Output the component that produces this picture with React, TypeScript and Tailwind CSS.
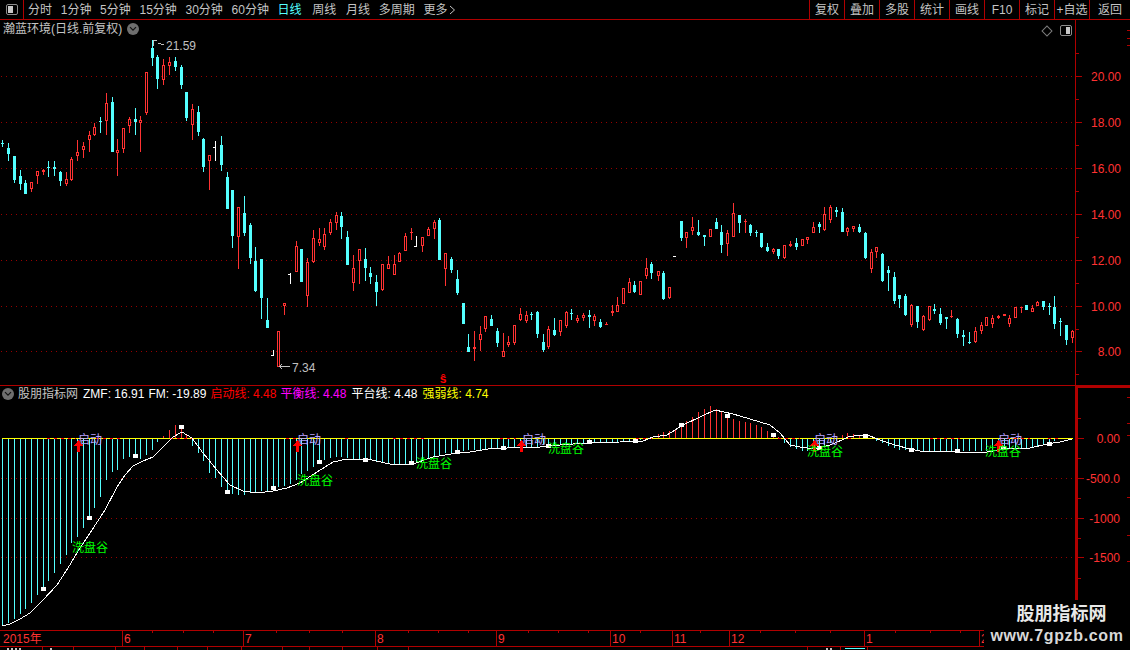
const RED = "#ff3232";
const CYAN = "#54ffff";
const FRAME = "#b00000";
const GRID = "#960000";

// x, wick top, body top, body bottom, wick bottom, kind
type Candle = [number, number, number, number, number, "c" | "r" | "w"];

const candles: Candle[] = [
  [2, 140, 143, 144, 147, "c"], [8, 143, 148, 154, 161, "c"], [14, 156, 156, 180, 183, "c"], [20, 170, 176, 184, 190, "c"],
  [25, 180, 183, 194, 194, "c"], [31, 182, 182, 189, 192, "r"], [37, 171, 171, 176, 184, "r"], [43, 169, 170, 172, 175, "r"],
  [48, 161, 167, 168, 177, "c"], [54, 161, 167, 169, 176, "c"], [60, 171, 172, 181, 186, "c"], [66, 172, 179, 184, 186, "r"],
  [71, 157, 159, 180, 181, "r"], [77, 140, 152, 156, 161, "r"], [83, 142, 146, 150, 158, "r"], [89, 131, 135, 140, 152, "r"],
  [94, 123, 127, 135, 136, "r"], [100, 117, 121, 122, 133, "c"], [106, 93, 103, 121, 135, "r"], [112, 97, 102, 152, 152, "c"],
  [117, 139, 150, 153, 176, "r"], [123, 128, 128, 149, 153, "r"], [129, 117, 119, 126, 133, "r"], [135, 108, 119, 122, 135, "c"],
  [140, 116, 120, 123, 152, "r"], [146, 72, 72, 113, 115, "r"], [152, 40, 48, 58, 66, "c"], [157, 55, 57, 79, 89, "c"],
  [163, 59, 65, 80, 85, "r"], [169, 57, 62, 66, 75, "r"], [175, 57, 61, 67, 71, "c"], [181, 65, 67, 85, 89, "c"],
  [186, 92, 92, 118, 121, "c"], [192, 104, 109, 125, 140, "r"], [198, 106, 112, 132, 136, "c"], [203, 138, 139, 167, 172, "c"],
  [209, 155, 155, 161, 190, "r"], [215, 141, 147, 147, 161, "w"], [221, 136, 145, 165, 171, "c"], [227, 172, 177, 209, 209, "c"],
  [232, 190, 190, 236, 248, "c"], [238, 207, 207, 237, 269, "r"], [244, 196, 213, 233, 236, "c"], [250, 223, 225, 258, 264, "c"],
  [255, 247, 261, 291, 292, "c"], [261, 259, 259, 298, 319, "c"], [267, 298, 320, 328, 328, "c"], [273, 350, 355, 355, 356, "w"],
  [278, 331, 331, 367, 367, "r"], [284, 303, 303, 306, 315, "r"], [290, 273, 274, 274, 284, "w"], [296, 241, 246, 272, 272, "r"],
  [301, 249, 249, 282, 282, "c"], [307, 258, 262, 296, 307, "r"], [313, 230, 238, 262, 263, "r"], [319, 228, 239, 243, 246, "r"],
  [324, 228, 234, 247, 250, "r"], [330, 219, 222, 233, 235, "r"], [336, 212, 215, 223, 230, "r"], [341, 212, 216, 227, 239, "c"],
  [347, 231, 237, 265, 265, "c"], [353, 255, 268, 283, 291, "r"], [359, 249, 249, 261, 284, "r"], [365, 248, 259, 268, 281, "c"],
  [370, 267, 273, 277, 284, "c"], [376, 275, 282, 292, 306, "c"], [382, 264, 264, 290, 291, "r"], [388, 256, 264, 269, 269, "r"],
  [394, 255, 264, 275, 275, "r"], [399, 252, 253, 262, 262, "r"], [405, 233, 236, 251, 251, "r"], [411, 228, 232, 232, 240, "r"],
  [416, 236, 246, 246, 247, "w"], [422, 237, 237, 246, 252, "r"], [428, 227, 229, 236, 236, "r"], [434, 220, 222, 229, 239, "r"],
  [439, 218, 220, 260, 260, "c"], [445, 253, 253, 269, 286, "r"], [451, 257, 259, 270, 273, "c"], [457, 270, 279, 293, 295, "c"],
  [463, 303, 303, 324, 324, "c"], [468, 334, 347, 352, 352, "c"], [474, 331, 347, 349, 361, "r"], [480, 326, 334, 340, 351, "r"],
  [485, 316, 316, 329, 332, "r"], [491, 315, 319, 326, 326, "c"], [497, 328, 331, 343, 347, "c"], [503, 333, 351, 357, 357, "r"],
  [508, 336, 342, 345, 347, "r"], [514, 325, 325, 343, 345, "r"], [520, 308, 314, 320, 321, "r"], [526, 311, 315, 321, 323, "r"],
  [531, 312, 314, 314, 320, "c"], [537, 311, 312, 334, 338, "c"], [543, 334, 342, 350, 352, "c"], [548, 326, 329, 347, 349, "r"],
  [554, 318, 330, 335, 336, "c"], [560, 320, 320, 332, 336, "r"], [566, 311, 312, 326, 328, "r"], [571, 309, 313, 314, 320, "c"],
  [577, 315, 318, 321, 323, "r"], [583, 313, 315, 318, 321, "r"], [589, 310, 315, 317, 328, "c"], [594, 314, 316, 321, 326, "r"],
  [600, 319, 322, 327, 328, "c"], [606, 322, 324, 325, 325, "r"], [612, 305, 311, 313, 316, "r"], [617, 297, 305, 312, 312, "r"],
  [623, 288, 288, 304, 304, "r"], [629, 278, 282, 293, 293, "r"], [634, 281, 285, 292, 293, "c"], [640, 281, 281, 295, 295, "r"],
  [646, 258, 268, 276, 279, "r"], [651, 262, 264, 273, 279, "c"], [658, 271, 271, 276, 281, "r"], [663, 271, 273, 299, 300, "c"],
  [669, 287, 287, 298, 299, "r"], [675, 256, 256, 257, 257, "w"], [681, 221, 221, 238, 241, "c"], [686, 232, 232, 238, 248, "r"],
  [692, 217, 227, 231, 235, "r"], [698, 220, 232, 235, 236, "c"], [704, 235, 235, 237, 246, "c"], [710, 229, 229, 237, 237, "r"],
  [716, 218, 222, 229, 229, "c"], [721, 225, 232, 245, 253, "c"], [727, 230, 233, 244, 256, "r"], [733, 203, 213, 237, 237, "r"],
  [739, 215, 215, 223, 233, "c"], [745, 219, 221, 221, 233, "r"], [750, 224, 225, 233, 236, "c"], [756, 230, 232, 232, 237, "c"],
  [761, 233, 233, 247, 248, "c"], [767, 243, 247, 251, 252, "c"], [773, 248, 249, 252, 254, "r"], [778, 249, 249, 256, 259, "c"],
  [784, 245, 245, 258, 259, "r"], [790, 241, 244, 246, 247, "r"], [796, 238, 243, 247, 250, "c"], [802, 239, 239, 246, 246, "r"],
  [807, 237, 237, 240, 244, "r"], [813, 222, 227, 233, 233, "r"], [819, 222, 224, 227, 233, "c"], [824, 207, 214, 230, 231, "r"],
  [830, 205, 207, 220, 223, "r"], [836, 207, 210, 212, 217, "c"], [842, 208, 212, 232, 232, "c"], [847, 227, 228, 232, 236, "r"],
  [853, 226, 226, 229, 232, "r"], [859, 224, 227, 232, 233, "c"], [865, 232, 233, 258, 259, "c"], [871, 249, 252, 269, 273, "r"],
  [876, 247, 247, 252, 258, "r"], [882, 253, 254, 281, 282, "c"], [888, 266, 270, 273, 291, "c"], [894, 272, 277, 301, 304, "c"],
  [899, 295, 295, 299, 308, "c"], [905, 294, 296, 315, 316, "c"], [911, 304, 305, 325, 327, "r"], [917, 306, 306, 322, 328, "c"],
  [923, 315, 316, 330, 331, "r"], [929, 306, 306, 320, 321, "r"], [934, 304, 309, 311, 314, "c"], [940, 308, 314, 323, 325, "c"],
  [946, 317, 317, 319, 329, "c"], [951, 310, 316, 316, 318, "r"], [957, 318, 319, 334, 338, "c"], [963, 330, 335, 337, 346, "c"],
  [969, 332, 342, 343, 344, "c"], [975, 327, 331, 342, 343, "r"], [981, 322, 325, 331, 334, "r"], [986, 317, 317, 326, 326, "r"],
  [992, 315, 318, 324, 328, "r"], [998, 315, 316, 318, 319, "r"], [1004, 314, 314, 316, 316, "r"], [1009, 315, 318, 324, 327, "r"],
  [1015, 307, 307, 318, 318, "r"], [1021, 307, 307, 307, 313, "r"], [1026, 305, 305, 310, 310, "c"], [1032, 305, 308, 312, 312, "r"],
  [1037, 301, 302, 306, 306, "r"], [1043, 301, 301, 307, 310, "c"], [1049, 303, 306, 306, 315, "c"], [1054, 296, 307, 324, 329, "c"],
  [1060, 318, 321, 322, 336, "c"], [1066, 325, 325, 340, 345, "c"], [1072, 330, 331, 338, 343, "r"],
];

// where the histogram bars end, read off the reference
const barEnds: [number, number][] = [
  [2, 625], [8, 623], [14, 619], [20, 614], [25, 609], [31, 603], [37, 595], [43, 589], [48, 581], [54, 573], [60, 564],
  [66, 555], [71, 543], [77, 537], [83, 528], [89, 518], [94, 508], [100, 497], [106, 480], [112, 472], [117, 470], [123, 459],
  [129, 457], [135, 455], [140, 459], [146, 455], [152, 450], [157, 442], [163, 436], [169, 430], [175, 425], [181, 427],
  [187, 437], [192, 446], [198, 453], [204, 463], [209, 473], [215, 478], [221, 487], [227, 490], [232, 494], [238, 495],
  [244, 495], [250, 493], [255, 492], [261, 491], [267, 491], [273, 488], [279, 487], [285, 486], [291, 483], [296, 480],
  [302, 473], [308, 470], [314, 466], [320, 462], [325, 459], [331, 458], [337, 457], [349, 458], [360, 460], [372, 460],
  [383, 463], [400, 464], [411, 463], [423, 460], [434, 457], [446, 453], [457, 452], [468, 450], [479, 450], [497, 449],
  [515, 448], [537, 447], [543, 445], [572, 445], [589, 442], [612, 443], [635, 441], [648, 439], [653, 436], [658, 434],
  [663, 432], [669, 431], [675, 430], [681, 426], [686, 421], [692, 417], [698, 412], [704, 409], [709, 406], [715, 408],
  [721, 412], [727, 416], [732, 418], [738, 421], [750, 423], [755, 425], [762, 427], [767, 431], [773, 433], [778, 437],
  [784, 443], [790, 447], [796, 449], [802, 451], [813, 451], [819, 448], [825, 447], [830, 443], [835, 442], [842, 435],
  [848, 433], [859, 435], [865, 435], [870, 438], [877, 441], [883, 443], [888, 446], [893, 448], [899, 450], [922, 451],
  [985, 451], [1000, 450], [1021, 448], [1032, 448], [1038, 447], [1044, 445], [1049, 443], [1055, 440], [1060, 439], [1072, 438],
];

const curve =
  "2,626 10,624 20,619 30,613 43,600 57,585 68,568 80,548 92,530 105,510 117,487 125,475 133,466 143,461 153,457 163,447 173,437 182,432 192,438 203,453 217,470 230,485 243,491 257,493 273,491 287,488 300,483 317,472 333,462 347,459 367,459 390,464 413,464 433,457 457,453 470,452 488,449 507,448 540,447 560,445 587,443 620,442 643,441 653,437 667,435 683,425 700,417 715,410 733,414 750,419 770,425 780,433 790,445 800,447 813,449 830,445 842,440 848,437 860,435 870,436 880,440 895,445 910,449 920,451 938,451 955,452 987,452 1000,450 1013,448 1030,448 1047,444 1060,442 1072,439";

const squares = [
  [43, 589], [89, 518], [135, 456], [181, 427], [227, 492], [273, 488], [319, 462], [365, 460], [411, 463], [457, 452], [503, 448],
  [548, 446], [589, 442], [635, 441], [681, 425], [727, 416], [773, 435], [819, 448], [865, 436], [911, 450], [957, 451], [1003, 448], [1049, 444],
];

const startLabels = [[78, 433], [297, 433], [522, 433], [814, 433], [998, 433]];
const arrowXs = [78, 297, 521, 814, 998];
const troughLabels = [[72, 541], [297, 474], [416, 457], [548, 442], [807, 445], [985, 445]];
const redDashes = [[47, 76], [96, 124], [170, 192], [286, 300], [345, 352], [393, 424], [500, 516], [636, 652], [778, 800], [848, 852], [930, 960], [1000, 1030], [1048, 1060]];

const leftTabs = [
  { label: "分时", cls: "" },
  { label: "1分钟", cls: "" },
  { label: "5分钟", cls: "" },
  { label: "15分钟", cls: "" },
  { label: "30分钟", cls: "" },
  { label: "60分钟", cls: "" },
  { label: "日线", cls: "text-[#54ffff]" },
  { label: "周线", cls: "ml-[2px]" },
  { label: "月线", cls: "ml-[1px]" },
  { label: "多周期", cls: "" },
];
const rightTabs = ["复权", "叠加", "多股", "统计", "画线", "F10", "标记", "+自选"];
const months = [
  { label: "2015年", w: "w-[122px]" },
  { label: "6", w: "w-[121px]" },
  { label: "7", w: "w-[132px]" },
  { label: "8", w: "w-[121px]" },
  { label: "9", w: "w-[114px]" },
  { label: "10", w: "w-[62px]" },
  { label: "11", w: "w-[57px]" },
  { label: "12", w: "w-[135px]" },
  { label: "1", w: "w-[115px]" },
  { label: "2", w: "w-[151px]" },
];

function barEnd(x: number) {
  for (let i = 1; i < barEnds.length; i++) {
    const [x0, y0] = barEnds[i - 1];
    const [x1, y1] = barEnds[i];
    if (x <= x1) return Math.round(y0 + ((y1 - y0) * (x - x0)) / (x1 - x0));
  }
  return 438;
}

function Candles() {
  return (
    <>
      {candles.map(([x, wt, bt, bb, wb, k], i) => {
        const color = k === "c" ? CYAN : k === "r" ? RED : "#ffffff";
        if (k === "w") {
          return (
            <g key={i} fill={color}>
              <rect x={x} y={wt} width={1} height={wb - wt} />
              <rect x={x - 2} y={bt} width={3} height={1} />
            </g>
          );
        }
        return (
          <g key={i} fill={color}>
            <rect x={x} y={wt} width={1} height={wb - wt} />
            <rect x={x - 1} y={bt} width={3} height={Math.max(bb - bt, 1)} />
            {k === "r" && bb - bt > 2 && <rect x={x} y={bt + 1} width={1} height={bb - bt - 2} fill="#000000" />}
          </g>
        );
      })}
    </>
  );
}

function PriceChart() {
  return (
    <svg width="1075" height="365" viewBox="0 20 1075 365" shapeRendering="crispEdges" className="block shrink-0">
      {[76, 122, 168, 214, 260, 306, 351].map((y) => (
        <line key={y} x1="1" x2="1075" y1={y + 0.5} y2={y + 0.5} stroke={GRID} strokeDasharray="1 4" />
      ))}
      <Candles />
      {/* high and low markers */}
      <path d="M153.5 46V40.5H157M158 43L164 45M279 366.5H290M279 366.5l3 -2M279 366.5l3 2" stroke="#c0c0c0" fill="none" />
      <text x="166" y="50" fontSize="12" fill="#c0c0c0">21.59</text>
      <text x="292" y="372" fontSize="12" fill="#c0c0c0">7.34</text>
      <text x="443" y="383" fontSize="12" fontWeight="700" fill="#ff0000" textAnchor="middle">ŝ</text>
    </svg>
  );
}

function PriceAxis() {
  const labels = [["20.00", 76], ["18.00", 122], ["16.00", 168], ["14.00", 214], ["12.00", 260], ["10.00", 306], ["8.00", 351]] as const;
  return (
    <svg width="54" height="365" viewBox="1076 20 54 365" shapeRendering="crispEdges" className="block shrink-0">
      {labels.map(([t, y]) => (
        <g key={t}>
          <rect x="1076" y={y} width="6" height="1" fill={FRAME} />
          <text x="1121" y={y + 5} fontSize="12" fill={RED} textAnchor="end" shapeRendering="auto">{t}</text>
        </g>
      ))}
      {[53, 99, 145, 191, 237, 283, 329, 374].map((y) => (
        <rect key={y} x="1076" y={y} width="3" height="1" fill={FRAME} />
      ))}
      {[30, 38, 45].map((y) => (
        <rect key={y} x="1127" y={y} width="3" height="1" fill={FRAME} />
      ))}
    </svg>
  );
}

function IndicatorChart() {
  return (
    <svg width="1075" height="244" viewBox="0 386 1075 244" shapeRendering="crispEdges" className="block shrink-0">
      {[478, 518, 557].map((y) => (
        <line key={y} x1="1" x2="1075" y1={y + 0.5} y2={y + 0.5} stroke={GRID} strokeDasharray="1 4" />
      ))}
      {candles.map(([x], i) => {
        const end = barEnd(x);
        return end >= 438 ? (
          <rect key={i} x={x} y={438} width={1} height={end - 438} fill={CYAN} />
        ) : (
          <rect key={i} x={x} y={end} width={1} height={438 - end} fill={RED} />
        );
      })}
      <rect x="2" y="438" width="1071" height="1" fill="#ffff00" />
      {redDashes.map(([a, b]) => (
        <line key={a} x1={a} x2={b} y1="438.5" y2="438.5" stroke="#ff0000" strokeDasharray="3 4" />
      ))}
      <polyline points={curve} fill="none" stroke="#ffffff" />
      {squares.map(([x, y]) => (
        <rect key={x} x={x - 2} y={y - 2} width="5" height="4" fill="#ffffff" />
      ))}
      {startLabels.map(([x, y]) => (
        <text key={x} x={x} y={y + 11} fontSize="12" fill="#b9a3ff" shapeRendering="auto">启动</text>
      ))}
      {arrowXs.map((x) => (
        <path key={x} d={`M${x + 0.5} 440l4.5 6h-3v6h-3v-6h-3z`} fill="#ff0000" />
      ))}
      {troughLabels.map(([x, y]) => (
        <text key={x} x={x} y={y + 11} fontSize="12" fill="#00ff00" shapeRendering="auto">洗盘谷</text>
      ))}
    </svg>
  );
}

function IndicatorAxis() {
  const labels = [["0.00", 438], ["-500.0", 478], ["-1000", 518], ["-1500", 557]] as const;
  return (
    <svg width="52" height="244" viewBox="1078 386 52 244" shapeRendering="crispEdges" className="block shrink-0">
      <rect x="1078" y="386" width="52" height="2" fill={FRAME} />
      {labels.map(([t, y]) => (
        <g key={t}>
          <rect x="1078" y={y} width="6" height="1" fill={FRAME} />
          <text x="1120" y={y + 5} fontSize="12" fill={RED} textAnchor="end" shapeRendering="auto">{t}</text>
        </g>
      ))}
      {[418, 458, 498, 538, 578].map((y) => (
        <rect key={y} x="1078" y={y} width="3" height="1" fill={FRAME} />
      ))}
      {[397, 423, 435, 497, 535, 561].map((y) => (
        <rect key={y} x="1127" y={y} width="3" height="1" fill={FRAME} />
      ))}
    </svg>
  );
}

function ToggleIcon({ side }: { side: "left" | "right" }) {
  return (
    <span className="flex h-[11px] w-[12px] rounded-[2px] border border-[#8c8c8c] p-[1px]">
      <span className={side === "left" ? "h-full w-[5px] bg-[#c8c8c8]" : "ml-auto h-full w-[4px] bg-[#c8c8c8]"} />
    </span>
  );
}

function RoundChevron() {
  return (
    <span className="flex h-[12px] w-[12px] shrink-0 items-center justify-center rounded-full bg-[#6e6e6e]">
      <svg width="8" height="6" viewBox="0 0 8 6" fill="none" stroke="#111111" strokeWidth="1.2">
        <path d="M1 1.2L4 4.2L7 1.2" />
      </svg>
    </span>
  );
}

export default function App() {
  return (
    <div className="relative flex h-[650px] w-[1130px] flex-col overflow-hidden bg-black font-['Liberation_Sans','Noto_Sans_CJK_SC',sans-serif] text-[12px] leading-none text-[#c4c4c4]">
      {/* toolbar */}
      <div className="flex h-[20px] shrink-0 items-center border-b border-[#b00000]">
        <div className="flex h-full w-[24px] items-center justify-center border-r border-[#b00000]">
          <ToggleIcon side="left" />
        </div>
        <div className="ml-[4px] flex items-center gap-[8.7px]">
          {leftTabs.map((t) => (
            <span key={t.label} className={t.cls}>{t.label}</span>
          ))}
          <span className="flex items-center gap-[2px]">
            更多
            <svg width="7" height="10" viewBox="0 0 7 10" fill="none" stroke="#c4c4c4">
              <path d="M1 1L5.5 5L1 9" />
            </svg>
          </span>
        </div>
        <div className="ml-auto flex h-full">
          {rightTabs.map((t) => (
            <span key={t} className="flex h-full w-[35px] items-center justify-center border-l border-[#b00000]">{t}</span>
          ))}
          <span className="flex h-full w-[41px] items-center justify-center border-l border-[#b00000]">返回</span>
        </div>
      </div>

      {/* price pane */}
      <div className="relative flex h-[366px] shrink-0 border-b border-[#b00000]">
        <PriceChart />
        <div className="w-px shrink-0 bg-[#b00000]" />
        <PriceAxis />
        <div className="absolute left-[3px] top-[3px] flex h-[12px] items-center gap-[5px]">
          <span>瀚蓝环境(日线.前复权)</span>
          <RoundChevron />
        </div>
        <div className="absolute left-[1042px] top-[5px] flex items-center gap-[9px]">
          <span className="ml-[1px] h-[8px] w-[8px] rotate-45 border border-[#7c7c7c]" />
          <ToggleIcon side="right" />
        </div>
      </div>

      {/* indicator pane */}
      <div className="relative flex h-[244px] shrink-0">
        <IndicatorChart />
        <div className="w-[3px] shrink-0 bg-[#b00000]" />
        <IndicatorAxis />
        <div className="absolute left-[2px] top-[2px] flex h-[12px] items-center whitespace-nowrap">
          <RoundChevron />
          <span className="ml-[4px]">股朋指标网</span>
          <span className="ml-[5px] text-white">ZMF: 16.91</span>
          <span className="ml-[4px] text-white">FM: -19.89</span>
          <span className="ml-[4px] text-[#ff0000]">启动线: 4.48</span>
          <span className="ml-[4px] text-[#ff00ff]">平衡线: 4.48</span>
          <span className="ml-[5px] text-white">平台线: 4.48</span>
          <span className="ml-[5px] text-[#ffff00]">强弱线: 4.74</span>
        </div>
      </div>

      {/* time axis */}
      <div className="relative flex h-[17px] shrink-0 border-y border-[#b00000] text-[#ff3232]">
        {months.map((m, i) => (
          <div key={m.label} className={`flex h-full shrink-0 items-center border-[#b00000] ${m.w} ${i === 0 ? "pl-[3px]" : "border-l pl-[1px]"}`}>
            {m.label}
          </div>
        ))}
        <svg width="1130" height="3" className="absolute left-0 top-0" shapeRendering="crispEdges">
          {[152, 183, 213, 276, 309, 342, 408, 438, 468, 528, 558, 588, 640, 700, 760, 795, 830, 895, 930, 960].map((x) => (
            <rect key={x} x={x} y="0" width="1" height="2" fill={FRAME} />
          ))}
        </svg>
      </div>

      {/* next strip, cut off by the window */}
      <svg width="1130" height="3" className="block shrink-0" shapeRendering="crispEdges">
        {[42, 73, 115, 144, 177, 207, 241, 282, 309, 342, 377, 408, 807, 840, 867].map((x) => (
          <rect key={x} x={x} y="0" width="1" height="3" fill={FRAME} />
        ))}
        {[7, 11, 15, 19, 50, 826, 830].map((x) => (
          <rect key={x} x={x} y="1" width="2" height="2" fill="#c4c4c4" />
        ))}
        <rect x="845" y="1" width="20" height="1" fill={CYAN} />
      </svg>

      {/* watermark */}
      <div className="absolute bottom-0 right-0 flex h-[50px] w-[146px] flex-col items-center bg-black">
        <span className="ml-[9px] mt-[5px] text-[18px] font-bold leading-[18px] text-[#e8e8e8]">股朋指标网</span>
        <span className="mt-[5px] text-[16px] font-bold leading-[16px] tracking-[0.65px] text-[#d8d8d8]">www.7gpzb.com</span>
      </div>
    </div>
  );
}
